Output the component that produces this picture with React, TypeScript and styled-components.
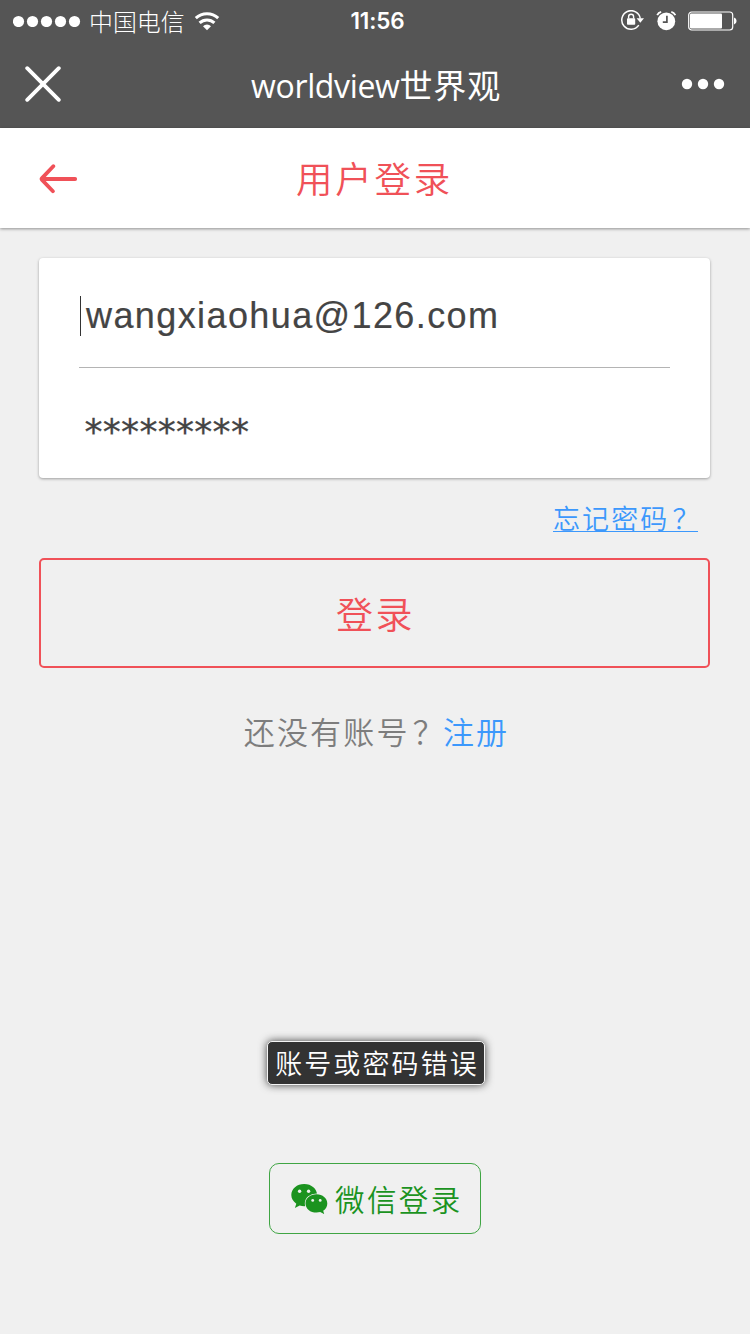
import React from "react";
import styled, { createGlobalStyle } from "styled-components";

const colors = {
  chrome: "#555555",
  page: "#f0f0f0",
  red: "#f05158",
  blue: "#3c98fc",
  green: "#1b931f",
  ink: "#444444",
};

const GlobalStyle = createGlobalStyle`
  *, *::before, *::after { box-sizing: border-box; }
  body {
    margin: 0;
    background: ${colors.page};
    font-family: "Noto Sans CJK SC", sans-serif;
    font-weight: 350;
  }
  svg { display: block; flex: none; }
`;

const Screen = styled.div`
  position: relative;
  display: flex;
  flex-direction: column;
  width: 750px;
  height: 1334px;
  overflow: hidden;
  background: ${colors.page};
`;

const Text = styled.span<{ $size: number; $spacing?: number; $color?: string }>`
  font-size: ${(p) => p.$size}px;
  line-height: 1;
  letter-spacing: ${(p) => p.$spacing ?? 0}px;
  color: ${(p) => p.$color ?? "#fff"};
  white-space: nowrap;
`;

const QuestionMark = styled.span`
  margin: 0 -3px 0 3px;
`;

const StatusBar = styled.header`
  display: grid;
  grid-template-columns: 1fr auto 1fr;
  align-items: center;
  height: 40px;
  padding: 0 12px 0 13px;
  background: ${colors.chrome};
`;

const StatusGroup = styled.div<{ $end?: boolean }>`
  display: flex;
  align-items: center;
  justify-content: ${(p) => (p.$end ? "flex-end" : "flex-start")};
`;

const Carrier = styled(Text)`
  margin: 0 9px 0 8px;
  font-weight: 300;
`;

const Clock = styled.time`
  padding: 1px 0 0 4px;
  font: 600 22.5px/40px Inter, sans-serif;
  letter-spacing: -0.1px;
  color: #fff;
`;

const NavBar = styled.nav`
  display: grid;
  grid-template-columns: 60px 1fr 60px;
  align-items: center;
  height: 88px;
  padding: 0 25px;
  background: ${colors.chrome};
`;

const NavTitle = styled.h1`
  margin: 0;
  padding: 4px 0 0 2px;
  text-align: center;
  font: 400 32px/84px "Open Sans", "Noto Sans CJK SC", sans-serif;
  letter-spacing: -0.35px;
  color: #fff;
`;

const NavTitleHan = styled.span`
  font-family: "Noto Sans CJK SC", sans-serif;
  font-size: 33px;
  line-height: 1;
  letter-spacing: 0.8px;
`;

const PageHeader = styled.div`
  display: grid;
  grid-template-columns: 60px 1fr 60px;
  align-items: center;
  height: 100px;
  padding: 2px 40px 0 39px;
  background: #fff;
  box-shadow: 0 1px 3px rgba(0, 0, 0, 0.4);
  text-align: center;
`;

const PageTitle = styled(Text)`
  padding-bottom: 1px;
`;

const Form = styled.form`
  display: flex;
  flex-direction: column;
  margin: 30px 40px 0 39px;
`;

const Card = styled.div`
  height: 220px;
  padding: 0 40px;
  border-radius: 4px;
  background: #fff;
  box-shadow: 0 1px 3px rgba(0, 0, 0, 0.35);
`;

const Field = styled.div<{ $divided?: boolean }>`
  display: flex;
  align-items: center;
  height: 110px;
  padding-top: ${(p) => (p.$divided ? "6px" : "0")};
  border-bottom: ${(p) => (p.$divided ? "1px solid #b4b4b4" : "0")};
  color: ${colors.ink};
`;

const Caret = styled.i`
  width: 1px;
  height: 40px;
  margin: 0 5px 0 1px;
  background: #333;
`;

const Email = styled.span`
  padding-top: 1px;
  font: 400 36px/40px "Liberation Sans", Arial, sans-serif;
  letter-spacing: 1.4px;
  -webkit-text-stroke: 0.2px ${colors.ink};
`;

const Password = styled.span`
  padding: 17px 0 0 5.5px;
  font: 400 36px/40px "DejaVu Sans", sans-serif;
  letter-spacing: 0.3px;
  -webkit-text-stroke: 0.3px ${colors.ink};
`;

const ForgotLink = styled.a`
  align-self: flex-end;
  margin: 26px 12px 0 0;
  width: 145px;
  height: 28px;
  white-space: nowrap;
  font-size: 27px;
  line-height: 28px;
  letter-spacing: 2.1px;
  color: ${colors.blue};
  border-bottom: 1px solid ${colors.blue};
`;

const LoginButton = styled.button`
  height: 110px;
  margin-top: 26px;
  padding: 2px 0 0 2px;
  border: 2px solid ${colors.red};
  border-radius: 5px;
  background: transparent;
  font-family: inherit;
  font-weight: inherit;
`;

const SignUp = styled.p`
  display: flex;
  justify-content: center;
  margin: 47px 0 0 3px;
`;

const Toast = styled.div`
  position: absolute;
  top: 1041px;
  left: 267px;
  display: flex;
  align-items: center;
  justify-content: center;
  width: 218px;
  height: 44px;
  padding: 0 0 1px 2px;
  border: 1px solid #f4f4f4;
  border-radius: 5px;
  background: #333;
  box-shadow: 0 0 8px rgba(0, 0, 0, 0.75);
`;

const WeChatButton = styled.button`
  display: flex;
  align-items: center;
  align-self: center;
  gap: 7px;
  width: 212px;
  height: 71px;
  margin: auto 0 100px;
  padding: 0 0 0 21px;
  border: 1px solid #3fa543;
  border-radius: 10px;
  background: transparent;
  font-family: inherit;
  font-weight: inherit;
`;

const SystemIcons = styled(StatusGroup)`
  gap: 12px;
`;

const MoreButton = styled.div`
  display: flex;
  justify-content: flex-end;
`;

const SignalDots = () => (
  <svg width="68" height="12" viewBox="0 0 68 12" fill="#fff">
    {[5.5, 19.5, 33.5, 47.5, 61.5].map((x) => (
      <circle key={x} cx={x} cy="6.5" r="5.6" />
    ))}
  </svg>
);

const WifiIcon = () => (
  <svg width="26" height="20" viewBox="0 0 26 20" fill="none" stroke="#fff" strokeWidth="3">
    <path d="M1.8 7.2a16.2 16.2 0 0 1 22.4 0" />
    <path d="M5.6 11.9a10.6 10.6 0 0 1 14.8 0" />
    <path d="M13 19.2l-4-4a5.8 5.8 0 0 1 8 0z" fill="#fff" stroke="none" />
  </svg>
);

const RotationLockIcon = () => (
  <svg width="24" height="22" viewBox="0 0 24 22" fill="none" stroke="#fff">
    <path d="M18.8 15.2A9.3 9.3 0 1 1 20.3 8.7" strokeWidth="1.5" />
    <path d="M16.6 8.2h7.4l-3.7 4.6z" fill="#fff" stroke="none" />
    <rect x="7" y="8.2" width="8.2" height="6.6" rx="0.8" fill="#fff" stroke="none" />
    <path d="M8.6 8.6V6.7a2.5 2.5 0 0 1 5 0v1.9" strokeWidth="1.4" />
  </svg>
);

const AlarmIcon = () => (
  <svg width="20" height="20" viewBox="0 0 20 20">
    <circle cx="10.3" cy="10.3" r="8.9" fill="#fff" />
    <path d="M1.2 4.2A6 6 0 0 1 5.2 .9M19.300 4.200a6 6 0 0 0-4-3.300" fill="none" stroke="#fff" strokeWidth="1.8" />
    <path d="M10.900 4.800v6.300H6.800" fill="none" stroke={colors.chrome} strokeWidth="1.7" />
  </svg>
);

const BatteryIcon = () => (
  <svg width="50" height="20" viewBox="0 0 50 20">
    <rect x="0.7" y="1" width="44" height="18" rx="3" fill="none" stroke="#fff" strokeWidth="1.2" />
    <rect x="2" y="2.5" width="32" height="15" rx="1" fill="#fff" />
    <path d="M46 6.4a3.8 3.8 0 0 1 0 7.2z" fill="#fff" />
  </svg>
);

const CloseIcon = () => (
  <svg width="36" height="36" viewBox="0 0 36 36" stroke="#fff" strokeWidth="3.8" strokeLinecap="round">
    <path d="M2.2 2.2l31.6 31.6M33.8 2.2L2.2 33.8" />
  </svg>
);

const MoreIcon = () => (
  <svg width="44" height="12" viewBox="0 0 44 12" fill="#fff">
    <circle cx="6" cy="6" r="5.2" />
    <circle cx="22" cy="6" r="5.2" />
    <circle cx="38" cy="6" r="5.2" />
  </svg>
);

const BackIcon = () => (
  <svg width="40" height="30" viewBox="0 0 40 30" fill="none" stroke={colors.red} strokeWidth="3.8" strokeLinecap="round" strokeLinejoin="round">
    <path d="M36.2 15H3M14.3 2.2L2.8 14.4a1 1 0 0 0 0 1.2L13.9 27.2" />
  </svg>
);

const WeChatIcon = () => (
  <svg width="37" height="30" viewBox="0 0 37 30" fill={colors.green}>
    <path d="M13.2 0C5.9 0 .3 4.8.3 11.1c0 3.5 1.8 6.5 5 8.6L3.9 23.9l4.8-2.5c1.5.5 3 .8 4.5.8 7.3 0 12.9-4.9 12.9-11.1S20.5 0 13.2 0z" />
    <path
      d="M25.5 10.2c-6.2 0-11 4.1-11 9.2s4.8 9.2 11 9.2c1.3 0 2.5-.2 3.7-.5l4 2-1-3.3c2.5-1.7 4.1-4.4 4.1-7.400 0-5.100-4.700-9.200-10.800-9.200z"
      stroke={colors.page}
      strokeWidth="1.4"
      paintOrder="stroke"
    />
    <g fill={colors.page}>
      <circle cx="8.6" cy="7.3" r="1.7" />
      <circle cx="17.6" cy="7.3" r="1.7" />
      <circle cx="21.7" cy="16.4" r="1.4" />
      <circle cx="29.2" cy="16.4" r="1.4" />
    </g>
  </svg>
);

export default function App() {
  return (
    <>
      <GlobalStyle />
      <Screen>
        <StatusBar>
          <StatusGroup>
            <SignalDots />
            <Carrier $size={23.9}>中国电信</Carrier>
            <WifiIcon />
          </StatusGroup>
          <Clock>11:56</Clock>
          <SystemIcons $end>
            <RotationLockIcon />
            <AlarmIcon />
            <BatteryIcon />
          </SystemIcons>
        </StatusBar>
        <NavBar>
          <CloseIcon />
          <NavTitle>
            worldview<NavTitleHan>世界观</NavTitleHan>
          </NavTitle>
          <MoreButton>
            <MoreIcon />
          </MoreButton>
        </NavBar>
        <PageHeader>
          <BackIcon />
          <PageTitle $size={36.5} $spacing={2.7} $color={colors.red}>用户登录</PageTitle>
        </PageHeader>
        <Form>
          <Card>
            <Field $divided>
              <Caret />
              <Email>wangxiaohua@126.com</Email>
            </Field>
            <Field>
              <Password>*********</Password>
            </Field>
          </Card>
          <ForgotLink>忘记密码<QuestionMark>？</QuestionMark></ForgotLink>
          <LoginButton type="button">
            <Text $size={37} $spacing={2.4} $color={colors.red}>登录</Text>
          </LoginButton>
        </Form>
        <SignUp>
          <Text $size={31} $spacing={2.2} $color="#7d7d7d">还没有账号<QuestionMark>？</QuestionMark></Text>
          <Text $size={31} $spacing={2.2} $color={colors.blue}>注册</Text>
        </SignUp>
        <WeChatButton type="button">
          <WeChatIcon />
          <Text $size={29.5} $spacing={2.4} $color={colors.green}>微信登录</Text>
        </WeChatButton>
        <Toast role="alert">
          <Text $size={27} $spacing={2.1}>账号或密码错误</Text>
        </Toast>
      </Screen>
    </>
  );
}
